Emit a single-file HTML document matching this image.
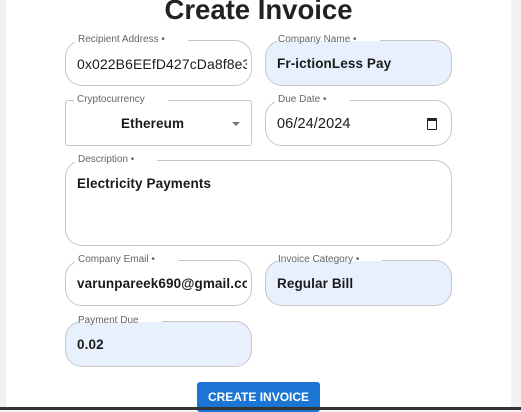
<!DOCTYPE html>
<html><head><style>
html,body{margin:0;padding:0;width:521px;height:410px;overflow:hidden;background:#f2f2f2;font-family:"Liberation Sans",Arial,sans-serif;}
.card{position:absolute;left:6px;top:0;width:505px;height:410px;background:#fff;}
h1{position:absolute;left:0;width:517px;top:-6px;margin:0;text-align:center;font-size:27.5px;font-weight:bold;color:#222;}
.f{position:absolute;box-sizing:border-box;border:1px solid #c6c6c6;border-radius:17px;background:#fff;}
.f.b{background:#e8f0fd;}
.f .l{position:absolute;top:-8px;left:9px;padding:0 3px;font-size:10px;color:#666;background:linear-gradient(#fff 58%,transparent 58%);line-height:14px;}
.f:not(.b) .l{background:#fff;}
.f .l:after{content:"";display:inline-block;width:20px;}
.f .v{position:absolute;left:11px;top:15px;font-size:13.5px;font-weight:bold;color:#1a1a1a;white-space:nowrap;overflow:hidden;right:4px;letter-spacing:0.1px;}
.btn{position:absolute;left:197px;top:382px;width:123px;height:30px;background:#1a76d2;border-radius:3px;color:#fff;font-weight:bold;font-size:12px;text-align:center;line-height:30px;}
.bar{position:absolute;left:0;top:407px;width:521px;height:3px;background:#333;}
</style></head><body>
<div class="card"></div>
<h1>Create Invoice</h1>
<div class="f" style="left:65px;top:40px;width:187px;height:46px"><span class="l">Recipient Address •</span><span class="v" style="font-weight:normal;font-size:14px">0x022B6EEfD427cDa8f8e3</span></div>
<div class="f b" style="left:265px;top:40px;width:187px;height:46px"><span class="l">Company Name •</span><span class="v">Fr-ictionLess Pay</span></div>
<div class="f" style="left:65px;top:100px;width:187px;height:46px;border-radius:3px"><span class="l" style="left:8px">Cryptocurrency</span><span class="v" style="left:55px">Ethereum</span><span style="position:absolute;left:166px;top:21px;width:0;height:0;border-left:4px solid transparent;border-right:4px solid transparent;border-top:4px solid #777"></span></div>
<div class="f" style="left:265px;top:100px;width:187px;height:46px"><span class="l">Due Date •</span><span class="v" style="font-weight:normal;font-size:14.5px">06/24/2024</span><span style="position:absolute;left:161px;top:17px;width:8px;height:8px;border:1.5px solid #222;border-top-width:3px;border-radius:1px"></span></div>
<div class="f" style="left:65px;top:160px;width:387px;height:86px"><span class="l">Description •</span><span class="v">Electricity Payments</span></div>
<div class="f" style="left:65px;top:260px;width:187px;height:46px"><span class="l">Company Email •</span><span class="v">varunpareek690@gmail.com</span></div>
<div class="f b" style="left:265px;top:260px;width:187px;height:46px"><span class="l">Invoice Category •</span><span class="v">Regular Bill</span></div>
<div class="f b" style="left:65px;top:321px;width:187px;height:46px"><span class="l">Payment Due</span><span class="v">0.02</span></div>
<div class="btn">CREATE INVOICE</div>
<div class="bar"></div>
</body></html>
